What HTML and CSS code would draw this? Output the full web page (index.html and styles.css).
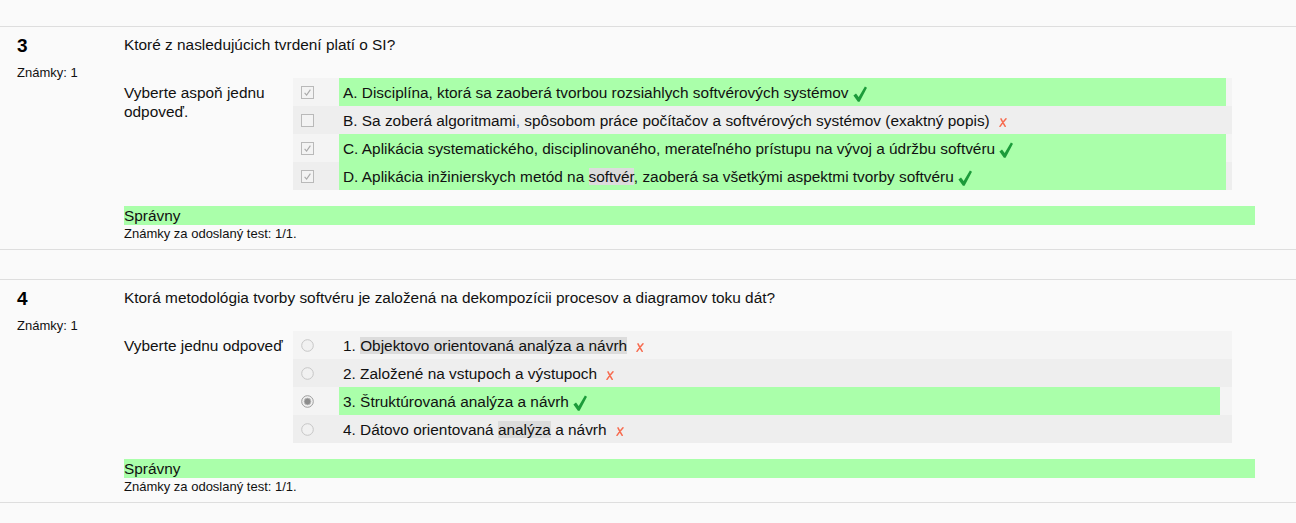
FILE: index.html
```html
<!DOCTYPE html>
<html lang="sk">
<head>
<meta charset="utf-8">
<title>Test</title>
<link rel="stylesheet" href="styles.css">
</head>
<body>
<div class="page">

  <div class="que">
    <div class="info">
      <h3 class="no">3</h3>
      <div class="grade">Známky: 1</div>
    </div>
    <div class="content">
      <div class="qtext">Ktoré z nasledujúcich tvrdení platí o SI?</div>
      <div class="ablock">
        <div class="prompt">Vyberte aspoň jednu odpoveď.</div>
        <div class="answer wide">
          <div class="row r0">
            <span class="ctl"><svg class="cb" viewBox="0 0 13 13"><rect x="0.5" y="0.5" width="12" height="12" fill="#f3f3f3" stroke="#b9b9b9"/><path d="M3.6 6.9 L5.6 9.1 L9.4 3.6" fill="none" stroke="#a9a9a9" stroke-width="1.1"/></svg></span>
            <label class="lbl correct">A. Disciplína, ktorá sa zaoberá tvorbou rozsiahlych softvérových systémov <svg class="ok" viewBox="0 0 14 16"><path d="M0.4 9.4 L3 7.6 L5.7 11 L11.9 0.4 L14 1.8 L6.6 15.8 L4.9 15.8 Z" fill="#1c9b3a"/></svg></label>
          </div>
          <div class="row r1">
            <span class="ctl"><svg class="cb" viewBox="0 0 13 13"><rect x="0.5" y="0.5" width="12" height="12" fill="#f3f3f3" stroke="#b9b9b9"/></svg></span>
            <label class="lbl">B. Sa zoberá algoritmami<span class="blue">,</span> spôsobom práce počítačov a softvérových systémov (exaktný popis) <svg class="bad" viewBox="0 0 8 9"><path d="M2 0.8 Q3.8 4.5 6.2 8.4 M7 0.8 Q3.8 4.4 1 8.4" fill="none" stroke="#f76b4f" stroke-width="1.5" stroke-linecap="round"/></svg></label>
          </div>
          <div class="row r0">
            <span class="ctl"><svg class="cb" viewBox="0 0 13 13"><rect x="0.5" y="0.5" width="12" height="12" fill="#f3f3f3" stroke="#b9b9b9"/><path d="M3.6 6.9 L5.6 9.1 L9.4 3.6" fill="none" stroke="#a9a9a9" stroke-width="1.1"/></svg></span>
            <label class="lbl correct">C. Aplikácia systematického, disciplinovaného, merateľného prístupu na vývoj a údržbu softvéru <svg class="ok" viewBox="0 0 14 16"><path d="M0.4 9.4 L3 7.6 L5.7 11 L11.9 0.4 L14 1.8 L6.6 15.8 L4.9 15.8 Z" fill="#1c9b3a"/></svg></label>
          </div>
          <div class="row r1">
            <span class="ctl"><svg class="cb" viewBox="0 0 13 13"><rect x="0.5" y="0.5" width="12" height="12" fill="#f3f3f3" stroke="#b9b9b9"/><path d="M3.6 6.9 L5.6 9.1 L9.4 3.6" fill="none" stroke="#a9a9a9" stroke-width="1.1"/></svg></span>
            <label class="lbl correct">D. Aplikácia inžinierskych metód na <span class="hl">softvér</span>, zaoberá sa všetkými aspektmi tvorby softvéru <svg class="ok" viewBox="0 0 14 16"><path d="M0.4 9.4 L3 7.6 L5.7 11 L11.9 0.4 L14 1.8 L6.6 15.8 L4.9 15.8 Z" fill="#1c9b3a"/></svg></label>
          </div>
        </div>
      </div>
      <div class="outcome">Správny</div>
      <div class="mark">Známky za odoslaný test: 1/1.</div>
    </div>
  </div>

  <div class="que">
    <div class="info">
      <h3 class="no">4</h3>
      <div class="grade">Známky: 1</div>
    </div>
    <div class="content">
      <div class="qtext">Ktorá metodológia tvorby softvéru je založená na dekompozícii procesov a diagramov toku dát?</div>
      <div class="ablock">
        <div class="prompt">Vyberte jednu odpoveď</div>
        <div class="answer narrow">
          <div class="row r0">
            <span class="ctl"><svg class="rb" viewBox="0 0 13 13"><circle cx="6.5" cy="6.5" r="5.8" fill="#f1f1f1" stroke="#c6c6c6"/></svg></span>
            <label class="lbl">1. <span class="hl">Objektovo orientovaná analýza a návrh</span> <svg class="bad" viewBox="0 0 8 9"><path d="M2 0.8 Q3.8 4.5 6.2 8.4 M7 0.8 Q3.8 4.4 1 8.4" fill="none" stroke="#f76b4f" stroke-width="1.5" stroke-linecap="round"/></svg></label>
          </div>
          <div class="row r1">
            <span class="ctl"><svg class="rb" viewBox="0 0 13 13"><circle cx="6.5" cy="6.5" r="5.8" fill="#f1f1f1" stroke="#c6c6c6"/></svg></span>
            <label class="lbl">2. Založené na vstupoch a výstupoch <svg class="bad" viewBox="0 0 8 9"><path d="M2 0.8 Q3.8 4.5 6.2 8.4 M7 0.8 Q3.8 4.4 1 8.4" fill="none" stroke="#f76b4f" stroke-width="1.5" stroke-linecap="round"/></svg></label>
          </div>
          <div class="row r0">
            <span class="ctl"><svg class="rb" viewBox="0 0 13 13"><circle cx="6.5" cy="6.5" r="5.8" fill="#f1f1f1" stroke="#9c9c9c"/><circle cx="6.5" cy="6.5" r="3.4" fill="#8c8c8c" stroke="#bdbdbd" stroke-width="0.8"/></svg></span>
            <label class="lbl correct">3. Štruktúrovaná analýza a návrh <svg class="ok" viewBox="0 0 14 16"><path d="M0.4 9.4 L3 7.6 L5.7 11 L11.9 0.4 L14 1.8 L6.6 15.8 L4.9 15.8 Z" fill="#1c9b3a"/></svg></label>
          </div>
          <div class="row r1">
            <span class="ctl"><svg class="rb" viewBox="0 0 13 13"><circle cx="6.5" cy="6.5" r="5.8" fill="#f1f1f1" stroke="#c6c6c6"/></svg></span>
            <label class="lbl">4. Dátovo orientovaná <span class="hl">analýza</span> a návrh <svg class="bad" viewBox="0 0 8 9"><path d="M2 0.8 Q3.8 4.5 6.2 8.4 M7 0.8 Q3.8 4.4 1 8.4" fill="none" stroke="#f76b4f" stroke-width="1.5" stroke-linecap="round"/></svg></label>
          </div>
        </div>
      </div>
      <div class="outcome">Správny</div>
      <div class="mark">Známky za odoslaný test: 1/1.</div>
    </div>
  </div>

</div>
</body>
</html>
```

FILE: styles.css
```css
html, body {
  margin: 0;
  padding: 0;
  background: #fafafa;
}

body {
  font-family: "Liberation Sans", Arial, sans-serif;
  color: #111;
  font-size: 15.4px;
}

.page {
  padding-top: 26px;
}

.que {
  display: flex;
  width: 1296px;
  height: 222px;
  border-top: 1px solid #dedede;
  border-bottom: 1px solid #dedede;
  margin-bottom: 29px;
  box-sizing: content-box;
}

.info {
  width: 107px;
  flex: none;
  padding-left: 17px;
}

.no {
  margin: 0;
  padding-top: 9px;
  font-size: 19px;
  line-height: 20px;
  font-weight: bold;
  color: #000;
}

.grade {
  margin-top: 9px;
  font-size: 13px;
  line-height: 15px;
}

.content {
  width: 1131px;
  flex: none;
  padding-top: 9px;
}

.qtext {
  line-height: 18px;
  height: 18px;
}

.ablock {
  display: flex;
  margin-top: 24px;
}

.prompt {
  width: 164px;
  flex: none;
  padding-top: 5px;
  padding-right: 5px;
  line-height: 19px;
}

.answer {
  width: 939px;
  flex: none;
}

.row {
  display: flex;
  height: 28px;
}

.r0 { background: #f4f4f4; }
.r1 { background: #eeeeee; }

.ctl {
  width: 38px;
  flex: none;
  padding-left: 8px;
  display: flex;
  align-items: center;
}

.cb, .rb {
  width: 13px;
  height: 13px;
  display: block;
}

.lbl {
  flex: 1;
  padding-left: 4px;
  padding-top: 1px;
  line-height: 27px;
  white-space: nowrap;
}

.wide .lbl { margin-right: 6px; }
.narrow .lbl { margin-right: 12px; }

.correct {
  background: #aaffaa;
}

.hl {
  background: #dcdcdc;
}

.blue {
  color: #2a5db0;
}

.ok {
  width: 14px;
  height: 16px;
  vertical-align: -4px;
}

.bad {
  width: 8px;
  height: 9px;
  margin-left: 5px;
  vertical-align: -1px;
}

.outcome {
  margin-top: 16px;
  background: #aaffaa;
  height: 19px;
  line-height: 19px;
}

.mark {
  margin-top: 1px;
  font-size: 13px;
  line-height: 15px;
}
```
